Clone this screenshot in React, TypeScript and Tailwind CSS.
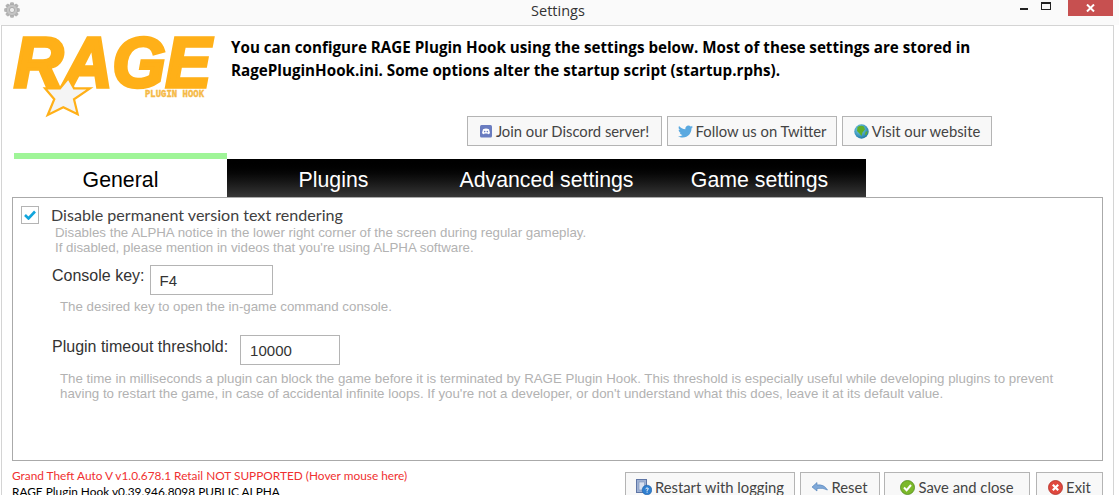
import React from "react";
import { FaTwitter } from "react-icons/fa";

const ui = { fontFamily: '"Open Sans", "Noto Sans", sans-serif' };
const la = { fontFamily: 'Lato, "Open Sans", sans-serif' };
const ar = { fontFamily: '"Liberation Sans", Arial, sans-serif' };

function Gear() {
  const teeth = [0, 45, 90, 135, 180, 225, 270, 315];
  return (
    <svg width="16" height="16" viewBox="0 0 16 16">
      {teeth.map((a) => (
        <rect key={a} x="6.2" y="0.4" width="3.6" height="15.2" rx="0.8" fill="#b4b4b4" transform={`rotate(${a} 8 8)`} />
      ))}
      <circle cx="8" cy="8" r="5.6" fill="#c4c4c4" stroke="#a4a4a4" strokeWidth="0.6" />
      <circle cx="8" cy="8" r="2.6" fill="#ececec" stroke="#9a9a9a" strokeWidth="0.7" />
    </svg>
  );
}

function Logo() {
  return (
    <svg width="202" height="84" viewBox="0 0 202 84" className="shrink-0 overflow-visible">
      <text x="2" y="53" fontFamily='"Liberation Sans", Arial, sans-serif' fontWeight="900" fontStyle="italic" fontSize="70" fill="#ffb018" stroke="#ffb018" strokeWidth="3.6" textLength="197" lengthAdjust="spacingAndGlyphs">RAGE</text>
      <polygon points="33,54.3 48,54.3 56.3,44.3 62,54.3 78,54.3 62,65.3 65.7,80.3 51.3,73.3 35.7,81 42.3,65.3" fill="#f4f4f4" stroke="#ffb018" strokeWidth="2.2" />
      <text x="133" y="63" fontFamily='"Liberation Mono", monospace' fontWeight="700" fontSize="10" fill="#f5b945" stroke="#f5b945" strokeWidth="0.4" textLength="59" lengthAdjust="spacingAndGlyphs">PLUGIN HOOK</text>
    </svg>
  );
}

function Discord() {
  return (
    <svg width="12" height="13" viewBox="0 0 12 13" className="shrink-0">
      <rect width="12" height="12.5" rx="1.5" fill="#6a7cc0" />
      <path d="M3 4.2 Q6 3 9 4.2 L10 8 Q9 9.2 8 9.2 L7.5 8.4 H4.5 L4 9.2 Q3 9.2 2 8 Z" fill="#fff" />
      <circle cx="4.7" cy="6.6" r="0.8" fill="#6a7cc0" />
      <circle cx="7.3" cy="6.6" r="0.8" fill="#6a7cc0" />
    </svg>
  );
}

function Globe() {
  return (
    <svg width="15" height="15" viewBox="0 0 15 15" className="shrink-0">
      <defs>
        <radialGradient id="g" cx="0.4" cy="0.35" r="0.75">
          <stop offset="0" stopColor="#7fd8f0" />
          <stop offset="1" stopColor="#146c9c" />
        </radialGradient>
      </defs>
      <circle cx="7.5" cy="7.5" r="7.2" fill="url(#g)" />
      <path d="M3.5 3 Q7 1 10 2.5 L11 5.5 L8.5 8.5 L7.5 12 L5.5 9.5 L3 7 Z" fill="#5fae2a" />
      <path d="M11.5 8 L13.5 7 L13 10 L11 11.5 Z" fill="#5fae2a" />
    </svg>
  );
}

function Docs() {
  return (
    <svg width="16" height="16" viewBox="0 0 16 16" className="shrink-0">
      <rect x="0.5" y="0.5" width="10" height="13" fill="#9fb2d4" stroke="#5f76a6" />
      <rect x="3" y="3" width="5.5" height="8" fill="#d9e1ef" stroke="#7f93ba" strokeWidth="0.6" />
      <circle cx="11" cy="11" r="4.8" fill="#2f7fd0" stroke="#1d5ea6" strokeWidth="0.6" />
      <path d="M9.6 9.8 Q11 8 12.4 9.6 Q12.4 10.6 11 11.4 V12" stroke="#fff" strokeWidth="1" fill="none" />
      <rect x="10.6" y="12.6" width="1" height="1" fill="#fff" />
    </svg>
  );
}

function Undo() {
  return (
    <svg width="16" height="10" viewBox="0 0 16 10" className="shrink-0">
      <path d="M0 5 L5 0.5 V3 Q12 2 15.5 8 Q11 5.5 5 6.5 V9 Z" fill="#7fa8d8" stroke="#4f80b8" strokeWidth="0.6" />
    </svg>
  );
}

function Check() {
  return (
    <svg width="15" height="15" viewBox="0 0 15 15" className="shrink-0">
      <circle cx="7.5" cy="7.5" r="7" fill="#7cb82a" stroke="#4f8a18" strokeWidth="0.8" />
      <path d="M4 7.5 L6.6 10.2 L11 5" fill="none" stroke="#fff" strokeWidth="2" />
    </svg>
  );
}

function Cross() {
  return (
    <svg width="15" height="15" viewBox="0 0 15 15" className="shrink-0">
      <circle cx="7.5" cy="7.5" r="7" fill="#e0483e" stroke="#b02c24" strokeWidth="0.8" />
      <path d="M4.8 4.8 L10.2 10.2 M10.2 4.8 L4.8 10.2" fill="none" stroke="#fff" strokeWidth="2.2" />
    </svg>
  );
}

function Btn({ w, icon, children, gap = "gap-[3px]" }: { w: string; icon: React.ReactNode; children: React.ReactNode; gap?: string }) {
  return (
    <div className={`${w} h-[30px] shrink-0 flex items-center justify-center ${gap} border border-[#b4b4b4] bg-[#f8f8f8] text-[#444] text-[14.8px]`} style={la}>
      {icon}
      <span className="whitespace-nowrap">{children}</span>
    </div>
  );
}

export default function App() {
  return (
    <div className="w-[1119px] h-[495px] overflow-hidden bg-white" style={ui}>
      <div className="h-[25px] bg-[#fafafa] flex items-start justify-between relative">
        <div className="pl-[4px] pt-[2px]"><Gear /></div>
        <div className="absolute left-0 right-[3px] top-[1px] text-center text-[14.5px] text-[#333] leading-[19px]">Settings</div>
        <div className="flex items-start pr-[6px]">
          <div className="w-[8px] h-[2px] bg-[#222] mt-[8px] mr-[13px]" />
          <div className="w-[10px] h-[8px] border border-[#222] border-t-2 mt-[2px] mr-[17px]" />
          <div className="w-[45px] h-[16px] bg-[#c75050] flex items-center justify-center text-white">
            <svg width="9" height="8" viewBox="0 0 9 8"><path d="M1 0.5 L8 7.5 M8 0.5 L1 7.5" stroke="#fff" strokeWidth="2" /></svg>
          </div>
        </div>
      </div>
      <div className="ml-[1px] w-[1113px] h-[500px] border border-[#d4d4d4] pl-[10px] pr-[9px]">
        <div className="flex pt-[8px] h-[90px]">
          <Logo />
          <div className="ml-[17px] pt-[2px] text-[15.2px] font-bold leading-[23px] text-black w-[800px]">
            You can configure RAGE Plugin Hook using the settings below. Most of these settings are stored in RagePluginHook.ini. Some options alter the startup script (startup.rphs).
          </div>
        </div>
        <div className="flex justify-end gap-[5px] pr-[112px]">
          <Btn w="w-[195px]" icon={<Discord />} gap="gap-[4px]">Join our Discord server!</Btn>
          <Btn w="w-[170px]" icon={<FaTwitter size={15} color="#5aa9e0" />}>Follow us on Twitter</Btn>
          <Btn w="w-[150px]" icon={<Globe />}>Visit our website</Btn>
        </div>
        <div className="flex mt-[7px] pl-[2px] items-end h-[44px]">
          <div className="w-[213px] h-[44px] border-t-[6px] border-[#9ff598] flex items-center justify-center text-[21.3px] text-black pt-[6px]" style={ar}>General</div>
          <div className="flex h-[38px] bg-gradient-to-b from-black to-[#383838] text-white text-[21.3px] pt-[5px]" style={ar}>
            <div className="w-[213px] flex items-center justify-center">Plugins</div>
            <div className="w-[213px] flex items-center justify-center">Advanced settings</div>
            <div className="w-[213px] flex items-center justify-center">Game settings</div>
          </div>
        </div>
        <div className="w-[1091px] h-[264px] border border-[#aaaaaa] pl-[8px] pt-[8px]">
          <div className="flex items-center h-[18px]">
            <div className="w-[18px] h-[18px] border border-[#b4b4b4] flex items-center justify-center">
              <svg width="12" height="10" viewBox="0 0 12 10"><path d="M1 5 L4.5 8.5 L11 1.5" fill="none" stroke="#12a5dc" strokeWidth="2.6" /></svg>
            </div>
            <span className="ml-[12px] text-[16.1px] text-[#404040] whitespace-nowrap" style={la}>Disable permanent version text rendering</span>
          </div>
          <div className="ml-[34px] mt-[1px] text-[13.3px] leading-[15px] text-[#b2b2b2]" style={ar}>
            <div>Disables the ALPHA notice in the lower right corner of the screen during regular gameplay.</div>
            <div>If disabled, please mention in videos that you're using ALPHA software.</div>
          </div>
          <div className="flex items-start ml-[31px] mt-[10px]">
            <span className="text-[16px] leading-[22px] text-[#333]" style={ar}>Console key:</span>
            <div className="ml-[5px] w-[123px] h-[30px] border border-[#b4b4b4] flex items-center pl-[9px] pt-[3px] text-[15px] text-[#333]" style={ar}>F4</div>
          </div>
          <div className="ml-[39px] mt-[4px] text-[13.3px] leading-[15px] text-[#b2b2b2]" style={ar}>The desired key to open the in-game command console.</div>
          <div className="flex items-start ml-[31px] mt-[21px]">
            <span className="text-[16px] leading-[22px] text-[#333] pt-[1px]" style={ar}>Plugin timeout threshold:</span>
            <div className="ml-[12px] w-[100px] h-[30px] border border-[#b4b4b4] flex items-center pl-[9px] pt-[3px] text-[15px] text-[#333]" style={ar}>10000</div>
          </div>
          <div className="ml-[39px] mt-[6px] w-[1000px] text-[13.3px] leading-[15px] text-[#b2b2b2]" style={ar}>
            The time in milliseconds a plugin can block the game before it is terminated by RAGE Plugin Hook. This threshold is especially useful while developing plugins to prevent having to restart the game, in case of accidental infinite loops. If you're not a developer, or don't understand what this does, leave it at its default value.
          </div>
        </div>
        <div className="flex justify-between w-[1091px] mt-[7px]">
          <div className="text-[11.85px] leading-[16px]" style={la}>
            <div className="text-[#f03030]">Grand Theft Auto V v1.0.678.1 Retail NOT SUPPORTED (Hover mouse here)</div>
            <div className="text-black">RAGE Plugin Hook v0.39.946.8098 PUBLIC ALPHA</div>
          </div>
          <div className="flex pt-[4px]">
            <Btn w="w-[170px]" icon={<Docs />}>Restart with logging</Btn>
            <div className="ml-[5px]"><Btn w="w-[80px]" icon={<Undo />}>Reset</Btn></div>
            <div className="ml-[4px]"><Btn w="w-[146px]" icon={<Check />}>Save and close</Btn></div>
            <div className="ml-[6px]"><Btn w="w-[67px]" icon={<Cross />}>Exit</Btn></div>
          </div>
        </div>
      </div>
    </div>
  );
}
